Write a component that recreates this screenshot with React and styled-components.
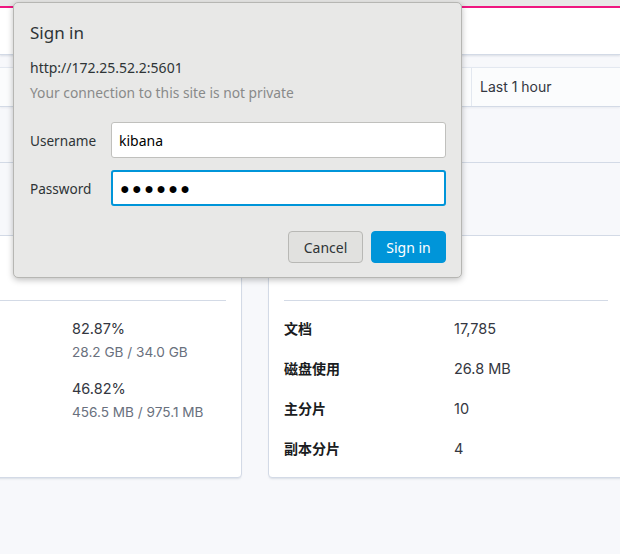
import styled, { createGlobalStyle } from 'styled-components';

const GlobalStyle = createGlobalStyle`
  html, body {
    margin: 0;
    padding: 0;
    background: #f7f8fb;
    overflow: hidden;
  }
  body {
    font-family: Inter, "Noto Sans", "Noto Sans CJK SC", sans-serif;
    color: #343741;
  }
`;

const Page = styled.div`
  position: relative;
  width: 620px;
  height: 554px;
  overflow: hidden;
`;

const ChromeStrip = styled.div`
  height: 6px;
  background: #e8e8e7;
  border-bottom: 2px solid #f0157f;
`;

const Header = styled.div`
  height: 46px;
  background: #fff;
  border-bottom: 1px solid #d3dae6;
  box-shadow: 0 1px 2px rgba(152, 162, 179, 0.3);
`;

const TimeBar = styled.div`
  margin-top: 12px;
  height: 38px;
  display: flex;
  justify-content: flex-end;
  background: #fbfcfd;
  border-top: 1px solid #e3e8f0;
  border-bottom: 1px solid #d3dae6;
  box-shadow: 0 1px 2px rgba(152, 162, 179, 0.15);
`;

const TimePicker = styled.div`
  width: 140px;
  border-left: 1px solid #e3e8f0;
  padding-left: 8px;
  padding-bottom: 1px;
  display: flex;
  align-items: center;
  font-size: 14px;
`;

const Rule = styled.div`
  margin-top: 55px;
  height: 72px;
  border-top: 1px solid #d3dae6;
`;

const CardRow = styled.div`
  display: flex;
  gap: 26px;
  margin-left: -114px;
`;

const Card = styled.div`
  flex: 0 0 356px;
  box-sizing: border-box;
  background: #fff;
  border: 1px solid #d3dae6;
  border-radius: 4px;
  box-shadow: 0 2px 2px -1px rgba(152, 162, 179, 0.3);
  padding: 16px 15px 8px;
`;

/* header space above the rule; the heading sits under the sign-in sheet */
const CardHead = styled.div`
  height: 48px;
`;

const Divider = styled.hr`
  margin: 0 0 8px;
  border: none;
  border-top: 1px solid #d3dae6;
`;

const Item = styled.div`
  display: grid;
  grid-template-columns: 170px 1fr;
  padding: 10px 0;
  font-size: 14.5px;
  line-height: 20px;
`;

const Label = styled.div`
  font-weight: 700;
  font-size: 14px;
  font-family: Inter, "Noto Sans CJK SC", sans-serif;
  color: #1a1c21;
`;

const Value = styled.div`
  color: #343741;
`;

const Sub = styled.div`
  margin: 3px 0 -3px;
  font-size: 13.6px;
  color: #69707d;
`;

const Dialog = styled.div`
  position: absolute;
  left: 13px;
  top: 2px;
  width: 449px;
  height: 276px;
  box-sizing: border-box;
  background: #e8e8e7;
  border: 1px solid #b6b6b3;
  border-radius: 5px;
  box-shadow: 0 2px 6px rgba(0, 0, 0, 0.25);
  padding: 19px 15px 14px 16px;
  font-family: "Noto Sans", sans-serif;
  color: #2e3436;
`;

const DialogTitle = styled.div`
  font-size: 17px;
  line-height: 22px;
`;

const Url = styled.div`
  margin-top: 14px;
  font-size: 14px;
  line-height: 20px;
`;

const Note = styled.div`
  margin-top: 5px;
  font-size: 13.8px;
  line-height: 20px;
  color: #888a8a;
`;

const Fields = styled.div`
  margin-top: 19px;
  display: grid;
  grid-template-columns: 81px 1fr;
  row-gap: 12px;
  align-items: center;
`;

const FieldLabel = styled.label`
  font-size: 13.6px;
`;

const Input = styled.div`
  height: 36px;
  box-sizing: border-box;
  background: #fff;
  border: ${(p) => (p.$focused ? '2px solid #0095d9' : '1px solid #c0c0bd')};
  border-radius: 3px;
  padding: 0 7px;
  display: flex;
  align-items: center;
  font-size: 14px;
  color: #000;
`;

const Dots = styled.span`
  font-size: 16px;
  letter-spacing: 2.4px;
`;

const Actions = styled.div`
  margin-top: 25px;
  display: flex;
  justify-content: flex-end;
  gap: 8px;
`;

const Button = styled.button`
  width: 75px;
  height: 32px;
  border-radius: 4px;
  font-family: "Noto Sans", sans-serif;
  font-size: 14px;
  border: 1px solid ${(p) => (p.$primary ? '#0095d9' : '#b8b8b5')};
  background: ${(p) => (p.$primary ? '#0095d9' : '#e1e1df')};
  color: ${(p) => (p.$primary ? '#fff' : '#2e3436')};
  padding: 0;
`;

export default function App() {
  return (
    <>
      <GlobalStyle />
      <Page>
        <ChromeStrip />
        <Header />
        <TimeBar>
          <TimePicker>Last 1 hour</TimePicker>
        </TimeBar>
        <Rule />

        <CardRow>
          <Card>
            <CardHead />
            <Divider />
            <Item>
              <Label />
              <Value>
                82.87%
                <Sub>28.2 GB / 34.0 GB</Sub>
              </Value>
            </Item>
            <Item>
              <Label />
              <Value>
                46.82%
                <Sub>456.5 MB / 975.1 MB</Sub>
              </Value>
            </Item>
          </Card>
          <Card>
            <CardHead />
            <Divider />
            <Item>
              <Label>文档</Label>
              <Value>17,785</Value>
            </Item>
            <Item>
              <Label>磁盘使用</Label>
              <Value>26.8 MB</Value>
            </Item>
            <Item>
              <Label>主分片</Label>
              <Value>10</Value>
            </Item>
            <Item>
              <Label>副本分片</Label>
              <Value>4</Value>
            </Item>
          </Card>
        </CardRow>

        <Dialog>
          <DialogTitle>Sign in</DialogTitle>
          <Url>http://172.25.52.2:5601</Url>
          <Note>Your connection to this site is not private</Note>
          <Fields>
            <FieldLabel>Username</FieldLabel>
            <Input>kibana</Input>
            <FieldLabel>Password</FieldLabel>
            <Input $focused>
              <Dots>●●●●●●</Dots>
            </Input>
          </Fields>
          <Actions>
            <Button>Cancel</Button>
            <Button $primary>Sign in</Button>
          </Actions>
        </Dialog>
      </Page>
    </>
  );
}
